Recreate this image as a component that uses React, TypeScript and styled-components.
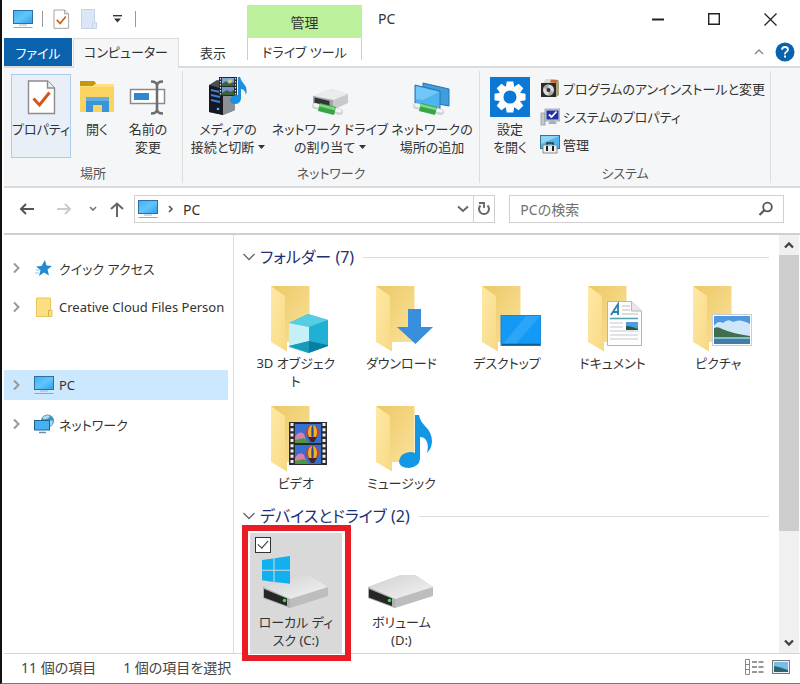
import React from "react";
import styled, { createGlobalStyle, css } from "styled-components";

const GlobalStyle = createGlobalStyle`
  *, *::before, *::after { box-sizing: border-box; }
  body { margin: 0; background: #fff; }
  body, button, input {
    font-family: "Noto Sans", "Noto Sans CJK JP", sans-serif;
    font-size: 13px;
    font-feature-settings: "palt";
    color: #333;
  }
  button { border: 0; padding: 0; background: none; cursor: default; }
  svg { display: block; flex: none; }
`;

const Window = styled.div`
  min-height: 100vh;
  display: flex;
  flex-direction: column;
  border-left: 2px solid #111;
  border-bottom: 1px solid #777;
  padding-left: 2px;
  background: #fff;
`;

/* Title bar */
const TitleBar = styled.header`
  display: flex;
  height: 38px;
  padding-right: 2px;
`;
const QuickAccess = styled.div`
  flex: none;
  width: 243px;
  display: flex;
  align-items: center;
  gap: 8px;
  padding-left: 8px;
`;
const QuickButton = styled.button`
  width: 20px;
  height: 22px;
  display: flex;
  align-items: center;
  justify-content: center;
`;
const Rule = styled.span`
  width: 1px;
  height: 16px;
  background: #999;
`;
const ContextTitle = styled.div`
  flex: none;
  width: 115px;
  margin-top: 5px;
  background: #bdf09a;
  display: flex;
  align-items: center;
  justify-content: center;
  font-size: 14px;
`;
const WindowTitle = styled.h1`
  flex: 1;
  margin: 0;
  padding-left: 16px;
  font-size: 14px;
  font-weight: 400;
  line-height: 38px;
`;
const Caption = styled.button`
  width: 56px;
  display: flex;
  align-items: center;
  justify-content: center;
`;

/* Ribbon */
const TabRow = styled.nav`
  display: flex;
  height: 30px;
  border-bottom: 2px solid #dadbdc;
`;
const Tab = styled.button<{ $kind?: "file" | "active" | "context"; $width: number }>`
  flex: none;
  width: ${(p) => p.$width}px;
  height: 28px;
  ${(p) =>
    p.$kind === "file" &&
    css`
      background: #0b62ac;
      color: #fff;
      margin-right: 1px;
    `}
  ${(p) =>
    p.$kind === "active" &&
    css`
      height: 30px;
      background: #f5f6f7;
      border: 1px solid #dadbdc;
      border-bottom: 0;
      padding-bottom: 4px;
    `}
  ${(p) =>
    p.$kind === "context" &&
    css`
      height: 22px;
      margin-bottom: 6px;
      padding-top: 6px;
      line-height: 16px;
      border: 1px solid #ccc;
      border-width: 0 1px;
    `}
`;
const TabTools = styled.div`
  flex: 1;
  display: flex;
  justify-content: flex-end;
  align-items: center;
  gap: 11px;
  padding-right: 5px;
`;
const Ribbon = styled.div`
  display: flex;
  height: 120px;
  padding: 3px 0;
  background: #f5f6f7;
  border-bottom: 2px solid #dadbdc;
`;
const Group = styled.section<{ $width: number }>`
  flex: none;
  width: ${(p) => p.$width}px;
  display: flex;
  flex-direction: column;
  border-right: 1px solid #dcdddf;
`;
const GroupBody = styled.div<{ $left: number }>`
  flex: 1;
  display: flex;
  align-items: flex-start;
  padding: 3px 0 0 ${(p) => p.$left}px;
`;
const GroupName = styled.h2`
  margin: 0;
  font-size: 13px;
  font-weight: 400;
  line-height: 20px;
  text-align: center;
  color: #555;
`;
const BigButton = styled.button<{ $width: number; $active?: boolean }>`
  flex: none;
  width: ${(p) => p.$width}px;
  height: 84px;
  display: flex;
  flex-direction: column;
  align-items: center;
  line-height: 18px;
  white-space: nowrap;
  border: 1px solid ${(p) => (p.$active ? "#a9cdea" : "transparent")};
  background: ${(p) => (p.$active ? "#e8eff7" : "transparent")};
  svg.art { margin: 1px 0 2px; }
`;
const WithCaret = styled.span`
  display: flex;
  align-items: center;
  gap: 4px;
`;
const SmallList = styled.div`
  display: flex;
  flex-direction: column;
  padding-left: 4px;
`;
const SmallButton = styled.button`
  height: 28px;
  display: flex;
  align-items: center;
  gap: 3px;
  white-space: nowrap;
`;

/* Address row */
const AddressRow = styled.div`
  height: 47px;
  display: flex;
  align-items: center;
  padding: 0 16px 3px 8px;
  border-bottom: 2px solid #cfcfcf;
`;
const NavButton = styled.button<{ $width: number }>`
  flex: none;
  width: ${(p) => p.$width}px;
  height: 28px;
  display: flex;
  align-items: center;
  justify-content: center;
`;
const AddressBox = styled.div`
  flex: 17 1 0;
  height: 28px;
  display: flex;
  align-items: center;
  border: 1px solid #d0d0d0;
`;
const Crumb = styled.button`
  flex: 1;
  display: flex;
  align-items: center;
  padding-left: 2px;
  gap: 9px;
  font-size: 14px;
`;
const AddressButton = styled.button<{ $split?: boolean }>`
  width: 21px;
  height: 26px;
  display: flex;
  align-items: center;
  justify-content: center;
  border-left: ${(p) => (p.$split ? "1px solid #d0d0d0" : "0")};
`;
const SearchBox = styled.label`
  flex: 12 1 0;
  min-width: 0;
  height: 28px;
  margin-left: 14px;
  padding: 0 9px 0 10px;
  display: flex;
  align-items: center;
  border: 1px solid #d0d0d0;
`;
const SearchInput = styled.input`
  flex: 1;
  min-width: 0;
  border: 0;
  padding: 0;
  outline: 0;
  background: none;
  font-size: 14px;
  &::placeholder { color: #707070; opacity: 1; }
`;

/* Main area */
const Main = styled.div`
  flex: 1;
  display: flex;
`;
const Sidebar = styled.nav`
  flex: none;
  width: 230px;
  display: flex;
  flex-direction: column;
  gap: 9px;
  padding: 18px 5px 0 0;
  border-right: 1px solid #dcdcdc;
`;
const TreeItem = styled.button<{ $selected?: boolean }>`
  height: 30px;
  display: flex;
  align-items: center;
  padding-left: 8px;
  white-space: nowrap;
  background: ${(p) => (p.$selected ? "#cce8ff" : "transparent")};
`;
const TreeIcon = styled.span`
  flex: none;
  width: 22px;
  margin: 0 4px 0 11px;
  display: flex;
  justify-content: center;
`;
const TreeGap = styled.div`
  height: 30px;
`;
const Pane = styled.main`
  flex: 1;
  min-width: 0;
  padding: 2px 8px 0 9px;
`;
const SectionHead = styled.h2`
  margin: 0;
  padding: 8px 2px 5px 0;
  display: flex;
  align-items: center;
  height: 37px;
  font-size: 16px;
  font-weight: 400;
  line-height: 24px;
  color: #1e2f75;
  white-space: nowrap;
  svg { margin-right: 5px; }
  &::after {
    content: "";
    flex: 1;
    height: 1px;
    margin-left: 9px;
    background: #dcdcdc;
  }
`;
const Tiles = styled.div`
  display: grid;
  grid-template-columns: repeat(auto-fill, minmax(104px, 1fr));
`;
const TileCell = styled.div`
  position: relative;
  padding: 0 7px;
  display: flex;
  align-items: flex-start;
`;
const Tile = styled.button<{ $selected?: boolean }>`
  width: 100%;
  display: flex;
  flex-direction: column;
  align-items: center;
  padding: 12px 0 4px;
  background: ${(p) => (p.$selected ? "#d9d9d9" : "transparent")};
`;
const TileName = styled.span`
  max-width: 82px;
  line-height: 18px;
  word-break: break-all;
`;
const TileCheck = styled.input`
  position: absolute;
  left: 12px;
  top: 4px;
  width: 16px;
  height: 16px;
  margin: 0;
  appearance: none;
  border: 1px solid #333;
  background: #fff;
  &:checked::after {
    content: "";
    position: absolute;
    left: 4px;
    top: 0;
    width: 6px;
    height: 10px;
    border: solid #333;
    border-width: 0 1px 1px 0;
    transform: rotate(42deg);
  }
`;
const Highlight = styled.div`
  position: absolute;
  inset: -8px -2px -8px -1px;
  border: 6px solid #e81c24;
  pointer-events: none;
  z-index: 1;
`;
const ScrollBar = styled.div`
  flex: none;
  width: 20px;
  margin-right: 1px;
  display: flex;
  flex-direction: column;
  background: #f0f0f0;
`;
const ScrollButton = styled.button`
  height: 20px;
  display: flex;
  align-items: center;
  justify-content: center;
`;
const ScrollTrack = styled.div`
  flex: 1;
  display: flex;
`;
const ScrollThumb = styled.div`
  flex: 1;
  height: 73%;
  background: #cdcdcd;
`;
const StatusBar = styled.footer`
  height: 30px;
  display: flex;
  align-items: center;
  gap: 27px;
  padding: 0 10px 4px 17px;
  border-top: 1px solid #d5d5d5;
  font-size: 14px;
  color: #444;
`;
const ViewButtons = styled.div`
  margin-left: auto;
  display: flex;
  align-items: center;
  gap: 8px;
`;

/* Icons */
const PcIcon = () => (
  <svg width="22" height="20" viewBox="0 0 22 20">
    <defs>
      <linearGradient id="screen" x1="0" y1="0" x2="1" y2="1">
        <stop offset="0" stopColor="#3fb0f5" />
        <stop offset=".5" stopColor="#62c6fb" />
        <stop offset="1" stopColor="#2e9fe8" />
      </linearGradient>
    </defs>
    <rect x="1.5" y="1.5" width="19" height="13" fill="url(#screen)" stroke="#2f6ea3" />
    <path d="M7 16h8" stroke="#9fb9cd" />
    <path d="M1.500 18.500h19" stroke="#8ea9bd" />
  </svg>
);

const PageCheckIcon = ({ w, h, className }: { w: number; h: number; className?: string }) => (
  <svg className={className} width={w} height={h} viewBox="0 0 32 42">
    <path d="M3.500 5h19l7 7v25.500h-26z" fill="#fff" stroke="#8c8c8c" strokeWidth="1.400" />
    <path d="M22.500 5v7h7" fill="#eee" stroke="#8c8c8c" strokeWidth="1.400" />
    <path d="M8.500 22.500l6 6.500 10-12.500" fill="none" stroke="#d2571d" strokeWidth="3" />
  </svg>
);

const NewFolderIcon = () => (
  <svg width="18" height="20" viewBox="0 0 18 20">
    <path d="M1.500.500h13v13h2v6h-15z" fill="#dbe7f6" stroke="#c3d3e8" />
    <path d="M12.500 19v-5h2" fill="none" stroke="#c3d3e8" />
  </svg>
);

const OpenFolderIcon = () => (
  <svg className="art" width="36" height="42" viewBox="0 0 36 42">
    <path d="M1 5h14l2 3h18v28H1z" fill="#fbd362" />
    <path d="M1 5h14l2 2-3 3H1z" fill="#c8960f" />
    <path d="M1 10h13l3-2h18v3H1z" fill="#ffe07c" />
    <path d="M7 36V21h23v15h-7v-7h-9v7z" fill="#3a94d6" />
    <path d="M7 21h23v4H7z" fill="#62aee2" />
  </svg>
);

const RenameIcon = () => (
  <svg className="art" width="38" height="42" viewBox="0 0 38 42" fill="none">
    <rect x="1.500" y="13.500" width="34" height="14" fill="#fff" stroke="#8a8a8a" strokeWidth="1.500" />
    <rect x="5" y="17" width="15" height="7" fill="#2f86d2" />
    <path d="M22 5.500q6 0 6 4.500 0-4.500 6-4.500M28 9v25M22 37.500q6 0 6-4.500 0 4.500 6 4.500" stroke="#6e6e6e" strokeWidth="2.500" />
  </svg>
);

const MediaIcon = () => (
  <svg className="art" width="40" height="42" viewBox="0 0 40 42">
    <path d="M1 9l8-5 18 3v27l-12 5L1 36z" fill="#4b4d52" />
    <path d="M15 13l12-4v25l-12 5z" fill="#8d9095" />
    <path d="M1 9l14 4v26L1 36z" fill="#15181e" />
    <path d="M3 14l9 2M3 19l9 2M3 24l9 2" stroke="#3b7fd6" strokeWidth="2" />
    <circle cx="10" cy="33" r="1.300" fill="#5cb6ff" />
    <rect x="11" y="1" width="18" height="19" fill="#26282c" />
    <rect x="14" y="2" width="12" height="8" fill="#7da6dd" />
    <rect x="14" y="11" width="12" height="8" fill="#6f97cf" />
    <path d="M14 8l4-3 3 3 5-2v4H14zM14 17l5-3 3 2 4-2v5H14z" fill="#3c6236" />
    <circle cx="22" cy="5" r="1.700" fill="#f1d04b" />
    <path d="M12.500 2v18M27.500 2v18" stroke="#ddd" strokeWidth="1.200" strokeDasharray="1.500 1.500" />
    <path d="M30 1h2q1 4 4 7 4 5 2 11-1-6-5-6v10q-1 5-6 5t-5-4q1-5 8-5z" fill="#1b8fe0" />
  </svg>
);

const NetPipe = () => (
  <>
    <path d="M3 30l25 6" stroke="#cfd5d5" strokeWidth="6" strokeLinecap="round" />
    <path d="M3 29l25 6" stroke="#f2f5f5" strokeWidth="3" strokeLinecap="round" />
    <path d="M7 31l16 4" stroke="#37a545" strokeWidth="8" />
    <path d="M7 29l16 4" stroke="#7fd884" strokeWidth="2.500" />
  </>
);

const NetDriveIcon = () => (
  <svg className="art" width="38" height="42" viewBox="-1 0 38 42">
    <path d="M1 20l18-7 17 5v9l-15 7-20-6z" fill="#c9cacb" />
    <path d="M1 20l18-7 17 5-15 6z" fill="#ececec" />
    <path d="M1 20l20 4v10L1 28z" fill="#a5a7a8" />
    <path d="M2.500 21.500l15 3.500v6l-15-4z" fill="#333" />
    <NetPipe />
  </svg>
);

const NetPlaceIcon = () => (
  <svg className="art" width="38" height="42" viewBox="0 0 38 42">
    <path d="M10 7l26 6v17l-26-5z" fill="#3f9ddd" stroke="#2874ad" />
    <path d="M2 9l25 6v19L2 27z" fill="#4fb3f0" stroke="#2874ad" />
    <path d="M3 10.500l23 5.500-16 8-7-1z" fill="#72c7f8" />
    <NetPipe />
  </svg>
);

const SettingsIcon = () => (
  <svg className="art" width="40" height="42" viewBox="0 0 40 42">
    <rect y="1" width="40" height="40" fill="#0a78d4" />
    <g transform="translate(20 21)" fill="#fff">
      {[0, 45, 90, 135, 180, 225, 270, 315].map((a) => (
        <path key={a} d="M-3.300-15.500h6.600l1 6h-8.600z" transform={`rotate(${a})`} />
      ))}
      <circle r="8.800" fill="none" stroke="#fff" strokeWidth="4.500" />
    </g>
  </svg>
);

const UninstallIcon = () => (
  <svg width="20" height="20" viewBox="0 0 20 20">
    <path d="M3 5l3-4 13 1v15l-4 2z" fill="#d7d2c4" />
    <path d="M6 1l12 1-2 3-12-1z" fill="#dedbd2" />
    <path d="M11 1.500l7 .500-1 3-7-.500z" fill="#c26a3c" />
    <path d="M16 5l3-2v14l-3 2z" fill="#a9a27e" />
    <rect x="1" y="5" width="15" height="14" fill="#2b2b2b" />
    <circle cx="8.500" cy="12" r="5.500" fill="#dcdcdc" />
    <path d="M8.500 12l-5-2a5 5 0 015-3.500zM8.500 12l5 2a5 5 0 01-5 3.500z" fill="#a8a8a8" />
    <circle cx="8.500" cy="12" r="2" fill="#333" />
  </svg>
);

const SystemIcon = () => (
  <svg width="20" height="20" viewBox="0 0 20 20">
    <rect x="1" y="7" width="4" height="12" fill="#c5c9cc" stroke="#8c9297" strokeWidth=".700" />
    <rect x="5" y="3" width="15" height="12" fill="#c9d3de" stroke="#8c9297" strokeWidth=".700" />
    <rect x="6.500" y="4.500" width="12" height="9" fill="#2431a5" />
    <path d="M9 8.500l2.500 2.500 5-5.500" fill="none" stroke="#fff" strokeWidth="1.800" />
    <path d="M10 15h5l2 3H8z" fill="#a9afb5" />
  </svg>
);

const ManageIcon = () => (
  <svg width="20" height="20" viewBox="0 0 20 20">
    <rect x=".500" y="1.500" width="19" height="13" fill="#4fb7ee" stroke="#3d6f95" />
    <path d="M1 2h18L1 10z" fill="#8dd4f8" />
    <path d="M7 11V9h6v2" fill="none" stroke="#333" strokeWidth="1.500" />
    <rect x="3" y="11" width="14" height="8" fill="#eef0f1" stroke="#777" strokeWidth=".800" />
    <path d="M7 12v5M13 12v5" stroke="#222" strokeWidth="2" />
  </svg>
);

const Caret = () => (
  <svg width="7" height="4" viewBox="0 0 7 4">
    <path d="M0 0h7L3.500 4z" fill="#333" />
  </svg>
);

type StrokeProps = { w: number; h: number; d: string; color?: string; stroke?: number };
const Stroke = ({ w, h, d, color = "#666", stroke = 1.5 }: StrokeProps) => (
  <svg width={w} height={h} viewBox={`0 0 ${w} ${h}`} fill="none">
    <path d={d} stroke={color} strokeWidth={stroke} />
  </svg>
);
const TreeChevron = () => <Stroke w={10} h={12} d="M2 1.500l4.500 4.500L2 10.500" color="#999" stroke={2} />;

const StarIcon = () => (
  <svg width="18" height="18" viewBox="0 0 18 18">
    <path d="M10 1l1.500 5.500L17 7l-4.500 3.500 1.500 6-5-3-5 3.500 1.500-6L1 7.500l5.500-.500z" fill="#2489cf" />
    <path d="M1 11h4M0 14h4" stroke="#8fc9ef" />
  </svg>
);
const SmallFolderIcon = () => (
  <svg width="18" height="20" viewBox="0 0 18 20">
    <path d="M1.500 1h14v12h1.500v6.500H1.500z" fill="#fbdf80" stroke="#e8c55f" />
    <path d="M13.500 19v-5.500h2" fill="none" stroke="#d9ae3c" />
  </svg>
);
const NetworkIcon = () => (
  <svg width="22" height="20" viewBox="0 0 22 20">
    <circle cx="14.500" cy="7" r="6.500" fill="#4390bd" />
    <path d="M10 3q4-3 7-1-2 4-7 3zM16 6l4 1-1 4-4 2z" fill="#a9dcec" />
    <rect x="1.500" y="6.500" width="15" height="9.500" fill="#42b2f2" stroke="#23648f" />
    <path d="M6 18.500h7" stroke="#6d8ea6" strokeWidth="1.500" />
  </svg>
);

const Folder = ({ children }: { children?: React.ReactNode }) => (
  <svg width="68" height="68" viewBox="0 0 68 68">
    <defs>
      <linearGradient id="back" x1="0" y1="0" x2="1" y2="1">
        <stop offset="0" stopColor="#ecc866" />
        <stop offset="1" stopColor="#fae29a" />
      </linearGradient>
      <linearGradient id="flap" x1="0" y1="0" x2="1" y2="1">
        <stop offset="0" stopColor="#ffe9a6" />
        <stop offset="1" stopColor="#f7d983" />
      </linearGradient>
    </defs>
    <path d="M9 0h38.500v56H20z" fill="url(#back)" />
    <path d="M9 0l14 10v44l2 2v9.500L9 56z" fill="url(#flap)" />
    {children}
  </svg>
);

const Cube = () => (
  <>
    <path d="M27 37l19-9 20 6v26l-20 7-19-6z" fill="#35bfd8" />
    <path d="M27 37l19-9 20 6-19 7z" fill="#56cde0" />
    <path d="M27 37l20 4v14l-20 5z" fill="#c4f1f7" />
    <path d="M47 41l19-7v25l-19-4z" fill="#1fb0d3" />
    <path d="M27 60l20-5v12z" fill="#189bb8" />
    <path d="M47 55l19 4v1l-19 7z" fill="#087fa2" />
  </>
);
const Arrow = () => <path d="M41 23h13v18h12L48.500 58 30 41h11z" fill="#3a8fdc" />;
const Desk = () => (
  <>
    <rect x="28" y="29.500" width="40" height="30" fill="#129af5" stroke="#2b7fc2" />
    <path d="M29 59l24-29H67L42 59z" fill="#2aa5f8" />
    <path d="M29 58.500h38" stroke="#0a5a94" strokeWidth="1.500" />
  </>
);
const Doc = () => (
  <>
    <path d="M28.500 15.500h24l10 9.500v34.500h-34z" fill="#fdfdfd" stroke="#b5b5b5" />
    <path d="M52.500 15.500v9.500h10" fill="#e8e8e8" stroke="#b5b5b5" />
    <path d="M32 29l7-11v11M34 26h6" stroke="#2a7fae" strokeWidth="1.800" fill="none" />
    <path d="M43 20h8M43 24h8M43 28h16" stroke="#bbb" />
    <path d="M31 32.500h28" stroke="#4e9fb0" strokeWidth="1.500" />
    <path d="M31 37h13M31 41h13M31 45h28M31 49h28M31 53h28" stroke="#c4c8d0" />
    <rect x="47" y="36" width="12" height="8" fill="#4b9fe0" />
    <path d="M47 40q5 0 12 3v1H47z" fill="#2c5544" />
  </>
);
const Photo = () => (
  <>
    <rect x="28.500" y="28.500" width="39" height="31" fill="#fff" stroke="#ccc" />
    <rect x="30" y="30" width="36" height="28" fill="#4d97e3" />
    <path d="M30 40q4-6 9-3 5-5 10-1 7-4 17 2v14H30z" fill="#cfe6f8" />
    <path d="M30 42q4-2 8 1 12 5 28 7v2H30z" fill="#3f6f4c" />
    <path d="M30 51h36v7H30z" fill="#3f7fa8" />
    <path d="M30 51h36v2H30z" fill="#87bcd8" />
  </>
);
const Balloon = ({ y }: { y: number }) => (
  <g transform={`translate(0 ${y})`}>
    <rect x="33" y="18" width="26" height="19" fill="#376fd0" />
    <path d="M33 31q4-7 9-3l3 9H33z" fill="#d87fae" />
    <path d="M33 34l9-2 5 5H33z" fill="#4a9a3c" />
    <ellipse cx="50.500" cy="26" rx="6.500" ry="7" fill="#c9392f" />
    <ellipse cx="50.500" cy="26" rx="4.500" ry="7" fill="#e8b52a" />
    <ellipse cx="50.500" cy="26" rx="1.200" ry="7" fill="#30469c" />
    <path d="M46 31h9l-3 5h-3z" fill="#4a2420" />
  </g>
);
const Film = () => (
  <>
    <rect x="27" y="16" width="38" height="43" fill="#2b2b2e" />
    <Balloon y={0} />
    <Balloon y={21} />
    <path d="M30 17v42M62 17v42" stroke="#eee" strokeWidth="3" strokeDasharray="3 2.300" />
  </>
);
const Note = () => (
  <path d="M48 9h4q1 6 6 11 7 7 7 15 0 7-5 12 2-8-1-13-2-3-6-3v22q-1 8-11 9-10 0-10-7 1-8 11-9 3 0 5 1z" fill="#1296e6" />
);

const Drive = ({ system }: { system?: boolean }) => (
  <svg width="68" height="68" viewBox="0 0 68 68">
    <defs>
      <linearGradient id="lid" x1="0" y1="0" x2="1" y2="1">
        <stop offset="0" stopColor="#d0d0d0" />
        <stop offset="1" stopColor="#f4f4f4" />
      </linearGradient>
    </defs>
    <path d="M1 42l33-12h14l18 12v9L28 63 1 53z" fill="#bcbdbe" />
    <path d="M1 42l33-12h14l18 12-38 12z" fill="url(#lid)" />
    <path d="M1 42l27 12v9L1 53z" fill="#aeafb0" />
    <path d="M2 44l23 9.500v7.500L2 52.500z" fill="#262626" />
    <circle cx="22.500" cy="55.500" r="1.800" fill="#3ddb4e" />
    {system && (
      <path
        d="M0 15l11.500-1.600v11.300H0zM12.500 13.200L28 11v13.700H12.500zM0 25.700h11.500V37L0 35.300zM12.500 25.700H28v13.100l-15.500-1.700z"
        fill="#12b0ee"
      />
    )}
  </svg>
);

const folders: { name: string; art: React.ReactNode }[] = [
  { name: "3D オブジェクト", art: <Cube /> },
  { name: "ダウンロード", art: <Arrow /> },
  { name: "デスクトップ", art: <Desk /> },
  { name: "ドキュメント", art: <Doc /> },
  { name: "ピクチャ", art: <Photo /> },
  { name: "ビデオ", art: <Film /> },
  { name: "ミュージック", art: <Note /> },
];

const SectionChevron = () => <Stroke w={12} h={8} d="M.5 1l5.500 5.500L11.500 1" color="#666" stroke={1.3} />;

export default function App() {
  return (
    <Window>
      <GlobalStyle />
      <TitleBar>
        <QuickAccess>
          <PcIcon />
          <Rule />
          <QuickButton aria-label="プロパティ"><PageCheckIcon w={18} h={24} /></QuickButton>
          <QuickButton aria-label="新しいフォルダー"><NewFolderIcon /></QuickButton>
          <QuickButton aria-label="カスタマイズ">
            <svg width="9" height="8" viewBox="0 0 9 8">
              <path d="M0 .700h9" stroke="#333" strokeWidth="1.400" />
              <path d="M1 3.500h7L4.500 7.500z" fill="#333" />
            </svg>
          </QuickButton>
          <Rule />
        </QuickAccess>
        <ContextTitle>管理</ContextTitle>
        <WindowTitle>PC</WindowTitle>
        <Caption aria-label="最小化"><Stroke w={12} h={12} d="M0 6.500h12" color="#222" stroke={2} /></Caption>
        <Caption aria-label="最大化"><Stroke w={12} h={12} d="M.7.7h10.600v10.600H.7z" color="#222" stroke={1.4} /></Caption>
        <Caption aria-label="閉じる"><Stroke w={13} h={13} d="M.5.5l12 12M12.500.5l-12 12" color="#222" stroke={1.3} /></Caption>
      </TitleBar>

      <TabRow>
        <Tab $kind="file" $width={68}>ファイル</Tab>
        <Tab $kind="active" $width={106}>コンピューター</Tab>
        <Tab $width={68}>表示</Tab>
        <Tab $kind="context" $width={115}>ドライブ ツール</Tab>
        <TabTools>
          <button aria-label="リボンの最小化"><Stroke w={10} h={6} d="M1 5l4-4 4 4" color="#888" stroke={1.3} /></button>
          <button aria-label="ヘルプ">
            <svg width="20" height="20" viewBox="0 0 20 20">
              <circle cx="10" cy="10" r="9.500" fill="#0a62ad" />
              <path d="M7 7.700q.2-2.700 3-2.700t3 2.500q0 1.500-1.600 2.300T10 12.300" fill="none" stroke="#fff" strokeWidth="1.800" />
              <rect x="9" y="13.500" width="2" height="2" fill="#fff" />
            </svg>
          </button>
        </TabTools>
      </TabRow>

      <Ribbon>
        <Group $width={179}>
          <GroupBody $left={7}>
            <BigButton $width={60} $active><PageCheckIcon className="art" w={32} h={42} />プロパティ</BigButton>
            <BigButton $width={52}><OpenFolderIcon />開く</BigButton>
            <BigButton $width={50}><RenameIcon />名前の<span>変更</span></BigButton>
          </GroupBody>
          <GroupName>場所</GroupName>
        </Group>
        <Group $width={297}>
          <GroupBody $left={2}>
            <BigButton $width={86}><MediaIcon />メディアの<WithCaret>接続と切断<Caret /></WithCaret></BigButton>
            <BigButton $width={118}><NetDriveIcon />ネットワーク ドライブ<WithCaret>の割り当て<Caret /></WithCaret></BigButton>
            <BigButton $width={86}><NetPlaceIcon />ネットワークの<span>場所の追加</span></BigButton>
          </GroupBody>
          <GroupName>ネットワーク</GroupName>
        </Group>
        <Group $width={291}>
          <GroupBody $left={4}>
            <BigButton $width={52}><SettingsIcon />設定<span>を開く</span></BigButton>
            <SmallList>
              <SmallButton><UninstallIcon />プログラムのアンインストールと変更</SmallButton>
              <SmallButton><SystemIcon />システムのプロパティ</SmallButton>
              <SmallButton><ManageIcon />管理</SmallButton>
            </SmallList>
          </GroupBody>
          <GroupName>システム</GroupName>
        </Group>
      </Ribbon>

      <AddressRow>
        <NavButton $width={30} aria-label="戻る"><Stroke w={16} h={12} d="M7 1L2 6l5 5M2 6h13" color="#555" stroke={2} /></NavButton>
        <NavButton $width={44} aria-label="進む"><Stroke w={16} h={12} d="M9 1l5 5-5 5M14 6H1" color="#ccc" stroke={2} /></NavButton>
        <NavButton $width={14} aria-label="履歴"><Stroke w={8} h={6} d="M1 1l3 3 3-3" color="#777" stroke={1.6} /></NavButton>
        <NavButton $width={34} aria-label="上へ"><Stroke w={14} h={15} d="M1 7l6-5.500L13 7M7 2v13" color="#666" stroke={2} /></NavButton>
        <AddressBox>
          <Crumb>
            <PcIcon />
            <Stroke w={6} h={8} d="M1 1l3 3-3 3" color="#555" stroke={1.6} />
            PC
          </Crumb>
          <AddressButton aria-label="場所の一覧"><Stroke w={12} h={8} d="M1 1.500l5 4.500 5-4.500" color="#666" stroke={2} /></AddressButton>
          <AddressButton $split aria-label="更新">
            <svg width="14" height="16" viewBox="0 0 14 16" fill="none">
              <path d="M3.500 4.500a5 5 0 107 0" stroke="#666" strokeWidth="2" />
              <path d="M2 2h5v5" stroke="#666" strokeWidth="1.800" />
            </svg>
          </AddressButton>
        </AddressBox>
        <SearchBox>
          <SearchInput type="text" placeholder="PCの検索" aria-label="PCの検索" />
          <svg width="16" height="16" viewBox="0 0 16 16" fill="none">
            <circle cx="9.500" cy="6" r="4.300" stroke="#555" strokeWidth="1.800" />
            <path d="M6.500 9L1.500 14" stroke="#555" strokeWidth="2.200" />
          </svg>
        </SearchBox>
      </AddressRow>

      <Main>
        <Sidebar>
          <TreeItem><TreeChevron /><TreeIcon><StarIcon /></TreeIcon>クイック アクセス</TreeItem>
          <TreeItem><TreeChevron /><TreeIcon><SmallFolderIcon /></TreeIcon>Creative Cloud Files Person</TreeItem>
          <TreeGap />
          <TreeItem $selected><TreeChevron /><TreeIcon><PcIcon /></TreeIcon>PC</TreeItem>
          <TreeItem><TreeChevron /><TreeIcon><NetworkIcon /></TreeIcon>ネットワーク</TreeItem>
        </Sidebar>
        <Pane>
          <SectionHead><SectionChevron />フォルダー (7)</SectionHead>
          <Tiles>
            {folders.map((f) => (
              <TileCell key={f.name}>
                <Tile><Folder>{f.art}</Folder><TileName>{f.name}</TileName></Tile>
              </TileCell>
            ))}
          </Tiles>
          <SectionHead><SectionChevron />デバイスとドライブ (2)</SectionHead>
          <Tiles>
            <TileCell>
              <Tile $selected><Drive system /><TileName>ローカル ディスク (C:)</TileName></Tile>
              <TileCheck type="checkbox" defaultChecked aria-label="ローカル ディスク (C:)" />
              <Highlight />
            </TileCell>
            <TileCell>
              <Tile><Drive /><TileName>ボリューム<br />(D:)</TileName></Tile>
            </TileCell>
          </Tiles>
        </Pane>
        <ScrollBar>
          <ScrollButton aria-label="上にスクロール"><Stroke w={10} h={8} d="M1 6.500l4-4 4 4" color="#444" stroke={2.4} /></ScrollButton>
          <ScrollTrack><ScrollThumb /></ScrollTrack>
          <ScrollButton aria-label="下にスクロール"><Stroke w={10} h={8} d="M1 1.500l4 4 4-4" color="#444" stroke={2.4} /></ScrollButton>
        </ScrollBar>
      </Main>

      <StatusBar>
        <span>11 個の項目</span>
        <span>1 個の項目を選択</span>
        <ViewButtons>
          <button aria-label="詳細表示">
            <svg width="20" height="16" viewBox="0 0 20 16" fill="none">
              <path d="M1.500.500h4v15h-4zM1.500 5.500h4M1.500 10.500h4" stroke="#888" />
              <path d="M8 3h5M14.500 3h5M8 8h5M14.500 8h5M8 13h5M14.500 13h5" stroke="#777" strokeWidth="1.300" />
            </svg>
          </button>
          <button aria-label="大アイコン">
            <svg width="18" height="14" viewBox="0 0 18 14">
              <rect x=".500" y=".500" width="17" height="13" fill="#e8f1f8" stroke="#777" />
              <rect x="2" y="2" width="14" height="10" fill="#79bdec" />
              <path d="M2 6q6 1 14 4v2H2z" fill="#2c6470" />
            </svg>
          </button>
        </ViewButtons>
      </StatusBar>
    </Window>
  );
}
